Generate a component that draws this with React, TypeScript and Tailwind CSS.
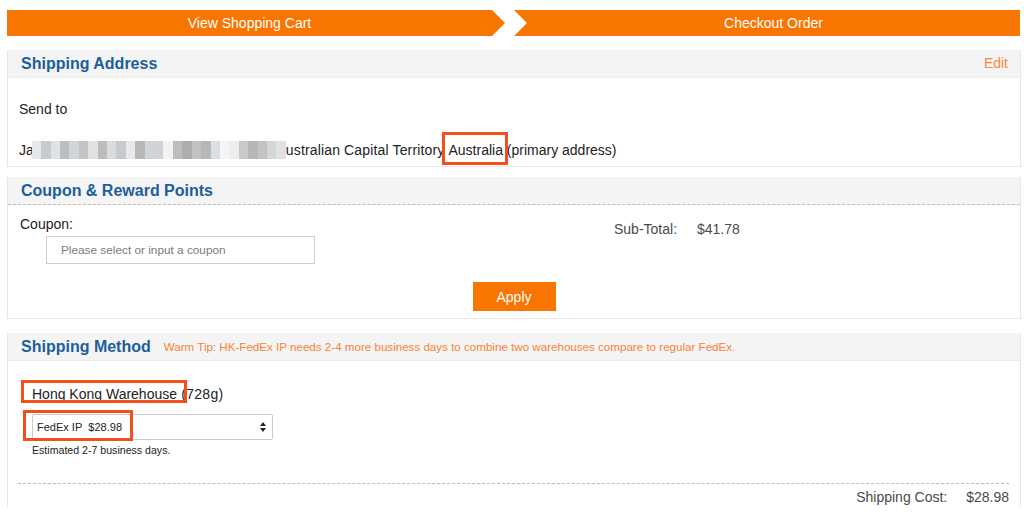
import React from "react";

const blurBlocks = [
  "#e6e8ea", "#c9cccf", "#dfe2e4", "#b9bec2", "#d2d5d8", "#c4c4c4", "#e3e1de", "#bcbcbc",
  "#d9dcdf", "#c6cacd", "#e9e9e9", "#b8b8b8", "#d1d4d6", "#cfd3d6", "#f2f2f2", "#bdbdbd",
  "#aeaeae", "#c2c2c2", "#b4b8bb", "#dcdfe1", "#f5f5f5", "#ededed", "#c9c9c9", "#b6b6b6",
  "#c3c3c3", "#d6d6d6", "#e2e2e2",
];

function PanelHeader({
  title,
  dashed,
  children,
}: {
  title: string;
  dashed?: boolean;
  children?: React.ReactNode;
}) {
  return (
    <div
      className={
        "flex items-center h-[28px] bg-[#f4f4f4] pl-[13px] pr-[12px] " +
        (dashed ? "border-b border-dashed border-[#bdbdbd]" : "border-b border-[#ececec]")
      }
    >
      <h3 className="text-[16px] font-bold text-[#1c5f99] leading-none">{title}</h3>
      {children}
    </div>
  );
}

export default function App() {
  return (
    <div className="w-[1024px] h-[515px] overflow-hidden bg-white font-['Liberation_Sans',Arial,sans-serif] text-[#222]">
      {/* steps bar */}
      <div className="flex gap-[9px] ml-[7px] pt-[10px]">
        <div className="w-[498px] h-[26px] bg-[#f77500] [clip-path:polygon(0_0,calc(100%-13px)_0,100%_50%,calc(100%-13px)_100%,0_100%)] flex items-center justify-center pr-[13px] text-white text-[14px]">
          View Shopping Cart
        </div>
        <div className="w-[506px] h-[26px] bg-[#f77500] [clip-path:polygon(0_0,100%_0,100%_100%,0_100%,13px_50%)] flex items-center justify-center pl-[13px] text-white text-[14px]">
          Checkout Order
        </div>
      </div>

      {/* shipping address */}
      <div className="ml-[7px] w-[1014px] mt-[14px] border border-t-0 border-[#e6e6e6]">
        <PanelHeader title="Shipping Address">
          <a className="ml-auto text-[14px] text-[#f5893e]">Edit</a>
        </PanelHeader>
        <div className="pl-[11px] pt-[21px] pb-[6px] text-[14px] leading-[20px]">
          <p>Send to</p>
          <p className="mt-[21px] flex items-center whitespace-nowrap">
            <span>Ja</span>
            <span className="inline-flex h-[18px] w-[254px] -ml-[2px]">
              {blurBlocks.map((c, i) => (
                <span key={i} className="flex-1 h-full" style={{ background: c }} />
              ))}
            </span>
            <span className="tracking-[0.15px]">ustralian Capital Territory&nbsp;</span>
            <span className="relative">
              Australia
              <span className="absolute -left-[6px] -right-[5px] -top-[8px] -bottom-[5px] border-[3px] border-[#f1501c]" />
            </span>
            <span>&nbsp;(primary address)</span>
          </p>
        </div>
      </div>

      {/* coupon */}
      <div className="ml-[7px] w-[1014px] mt-[10px] border border-t-0 border-[#e6e6e6]">
        <PanelHeader title="Coupon & Reward Points" dashed />
        <div className="pl-[12px] pt-[9px] pb-[7px] text-[14px] leading-[20px]">
          <div className="flex">
            <div className="w-[594px]">
              <p>Coupon:</p>
              <div className="ml-[26px] mt-[2px] w-[269px] h-[28px] border border-[#cfcfcf] flex items-center pl-[14px] text-[11.8px] text-[#7a7a7a]">
                Please select or input a coupon
              </div>
            </div>
            <div className="mt-[5px] flex text-[#4a4a4a]">
              <span className="w-[83px]">Sub-Total:</span>
              <span>$41.78</span>
            </div>
          </div>
          <div className="flex justify-center mt-[18px] pr-[12px]">
            <button className="w-[83px] h-[29px] bg-[#f77500] text-white text-[14px]">Apply</button>
          </div>
        </div>
      </div>

      {/* shipping method */}
      <div className="ml-[7px] w-[1014px] mt-[14px] border border-t-0 border-b-0 border-[#e6e6e6]">
        <PanelHeader title="Shipping Method">
          <span className="ml-[13px] text-[11.6px] text-[#f5843a]">
            Warm Tip: HK-FedEx IP needs 2-4 more business days to combine two warehouses compare to regular FedEx.
          </span>
        </PanelHeader>
        <div className="pl-[10px] pr-[11px] pt-[23px]">
          <div className="pl-[14px]">
            <p className="text-[14px] leading-[20px]">
              <span className="relative">
                Hong Kong Warehouse
                <span className="absolute -left-[11px] -right-[10px] -top-[6px] -bottom-[1px] border-[3px] border-[#f1501c]" />
              </span>
              <span className="tracking-[0.3px]"> (728g)</span>
            </p>
            <div className="relative mt-[10px] w-[241px] h-[26px] border border-[#cccccc] rounded-[2px] flex items-center pl-[4px] pr-[6px] text-[11px]">
              <span>FedEx IP&nbsp;&nbsp;$28.98</span>
              <svg className="ml-auto" width="6" height="10" viewBox="0 0 6 10">
                <path d="M3 0 L6 4 H0 Z" fill="#222" />
                <path d="M0 6 H6 L3 10 Z" fill="#222" />
              </svg>
              <span className="absolute -left-[10px] -top-[5px] -bottom-[2px] w-[110px] border-[3px] border-[#f1501c]" />
            </div>
            <p className="mt-[3px] text-[10.6px] leading-[14px]">Estimated 2-7 business days.</p>
          </div>
          <div className="mt-[26px] border-t border-dashed border-[#bdbdbd]" />
          <div className="mt-[3px] flex justify-end text-[14px] leading-[20px] text-[#4a4a4a]">
            <span className="w-[110px]">Shipping Cost:</span>
            <span>$28.98</span>
          </div>
        </div>
      </div>
    </div>
  );
}
